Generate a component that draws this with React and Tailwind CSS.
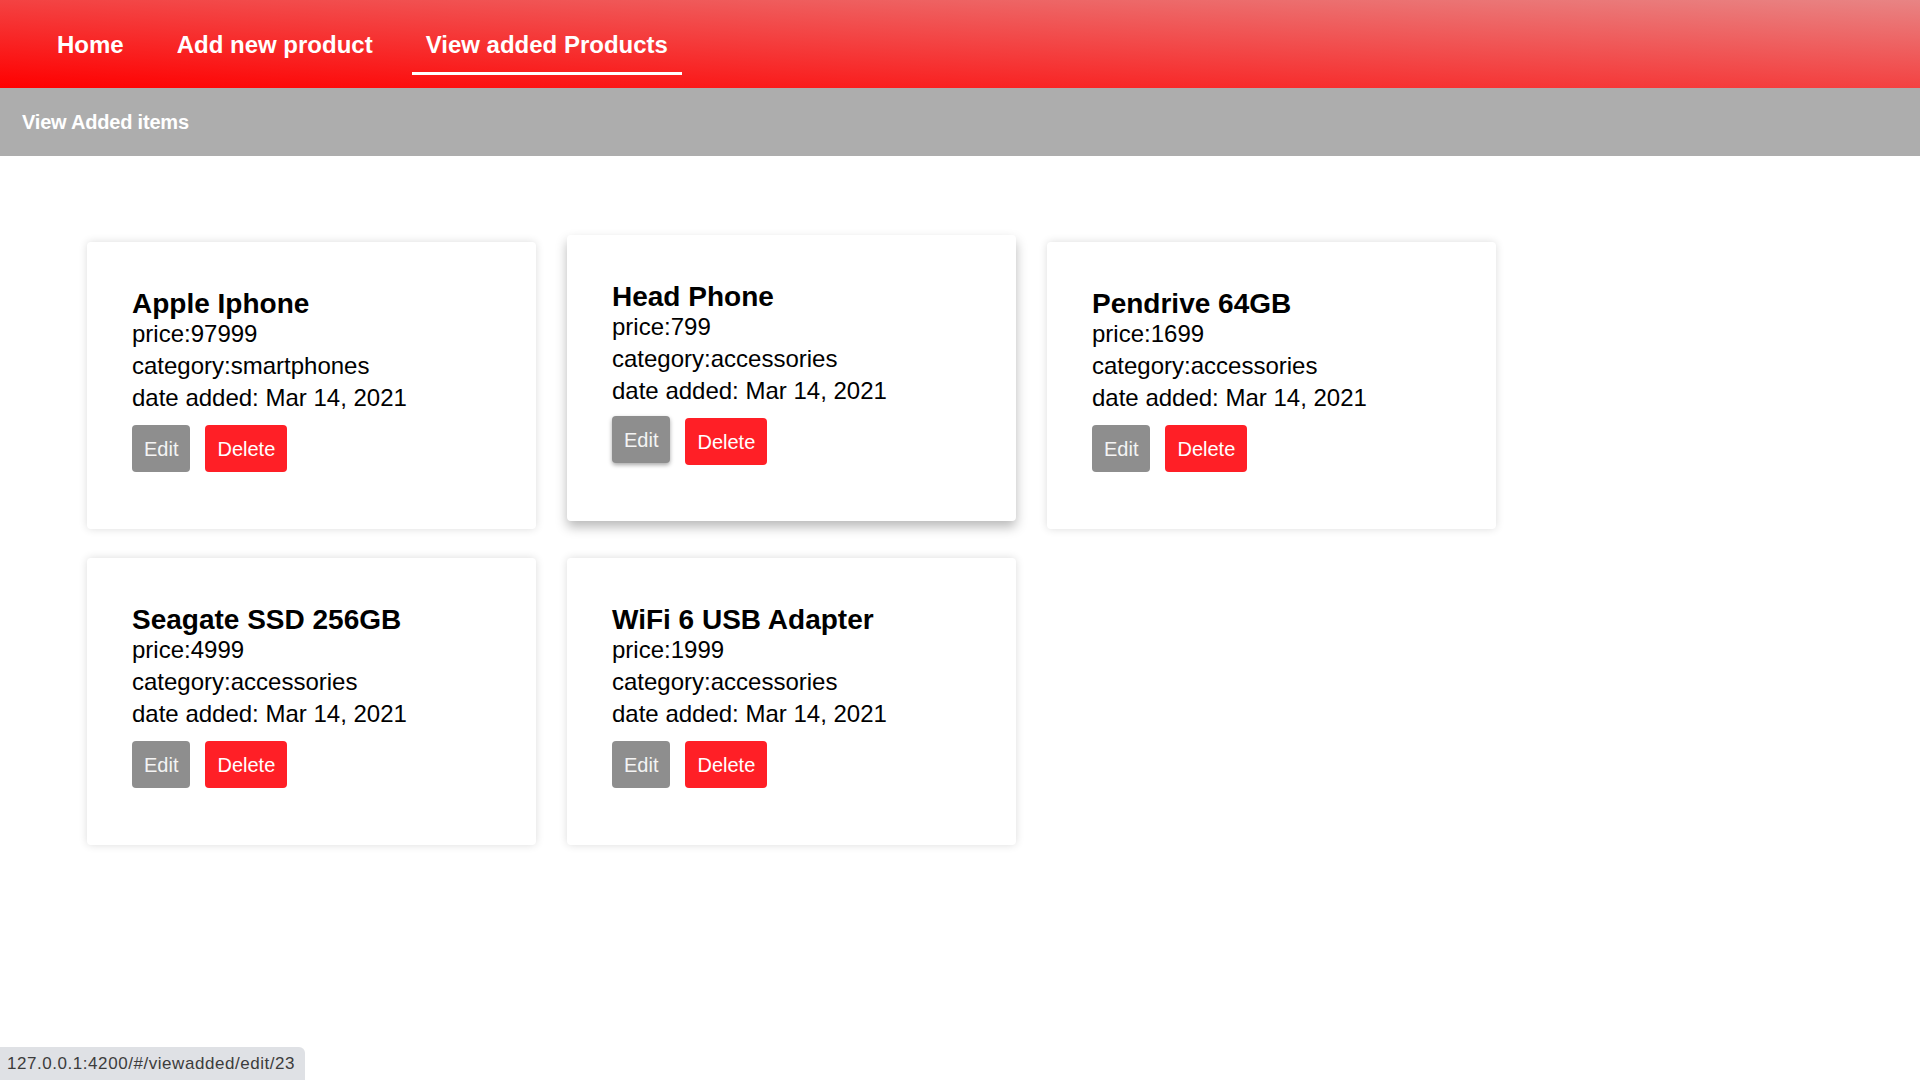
import React from "react";

const products = [
  { name: "Apple Iphone", price: "97999", category: "smartphones" },
  { name: "Head Phone", price: "799", category: "accessories", hover: true },
  { name: "Pendrive 64GB", price: "1699", category: "accessories" },
  { name: "Seagate SSD 256GB", price: "4999", category: "accessories" },
  { name: "WiFi 6 USB Adapter", price: "1999", category: "accessories" },
];

function Card({ p }) {
  return (
    <div
      className={
        p.hover
          ? "bg-white rounded-[4px] h-[286px] pt-[47px] px-[45px] -translate-y-[7px] shadow-[0_6px_12px_rgba(0,0,0,0.28)]"
          : "bg-white rounded-[4px] h-[287px] pt-[47px] px-[45px] shadow-[0_0_9px_rgba(0,0,0,0.14)]"
      }
    >
      <div className="text-[28px] font-bold leading-[29px] text-black">{p.name}</div>
      <div className="text-[24px] leading-[32px] text-black">price:{p.price}</div>
      <div className="text-[24px] leading-[32px] text-black">category:{p.category}</div>
      <div className="text-[24px] leading-[32px] text-black">date added: Mar 14, 2021</div>
      <div className="mt-[11px] flex gap-[15px] items-start">
        <button
          className={
            p.hover
              ? "h-[47px] px-[12px] rounded-[4px] bg-[#8e8e8e] text-[20px] text-[#f4f4f4] -translate-y-[2px] shadow-[0_2px_4px_rgba(0,0,0,0.35)]"
              : "h-[47px] px-[12px] rounded-[4px] bg-[#8e8e8e] text-[20px] text-[#f4f4f4]"
          }
        >
          Edit
        </button>
        <button className="h-[47px] px-[12px] rounded-[4px] bg-[#ff1f26] text-[20px] text-white">
          Delete
        </button>
      </div>
    </div>
  );
}

export default function App() {
  return (
    <div className="min-h-screen bg-white font-['Liberation_Sans',Arial,sans-serif] relative">
      <nav className="h-[88px] bg-[linear-gradient(to_top_right,#ff0000,#e88484)] flex pl-[43px] gap-[25px]">
        {["Home", "Add new product", "View added Products"].map((t, i) => (
          <div
            key={t}
            className={
              i === 2
                ? "h-[75px] pt-[31px] px-[14px] border-b-[3px] border-white text-white font-bold text-[24px] leading-[28px]"
                : "h-[75px] pt-[31px] px-[14px] text-white font-bold text-[24px] leading-[28px]"
            }
          >
            {t}
          </div>
        ))}
      </nav>
      <div className="h-[68px] bg-[#adadad] pl-[22px] pt-[23px]">
        <div className="text-white font-bold text-[20px] leading-[22px] tracking-[-0.2px]">View Added items</div>
      </div>
      <main className="pt-[86px] pl-[87px] grid grid-cols-[repeat(3,449px)] gap-x-[31px] gap-y-[29px]">
        {products.map((p) => (
          <Card key={p.name} p={p} />
        ))}
      </main>
      <div className="fixed bottom-0 left-0 w-[305px] h-[33px] bg-[#dfe1e5] rounded-tr-[6px] pl-[7px] text-[17px] leading-[33px] text-[#3c3c3c] tracking-[0.55px]">
        127.0.0.1:4200/#/viewadded/edit/23
      </div>
    </div>
  );
}
